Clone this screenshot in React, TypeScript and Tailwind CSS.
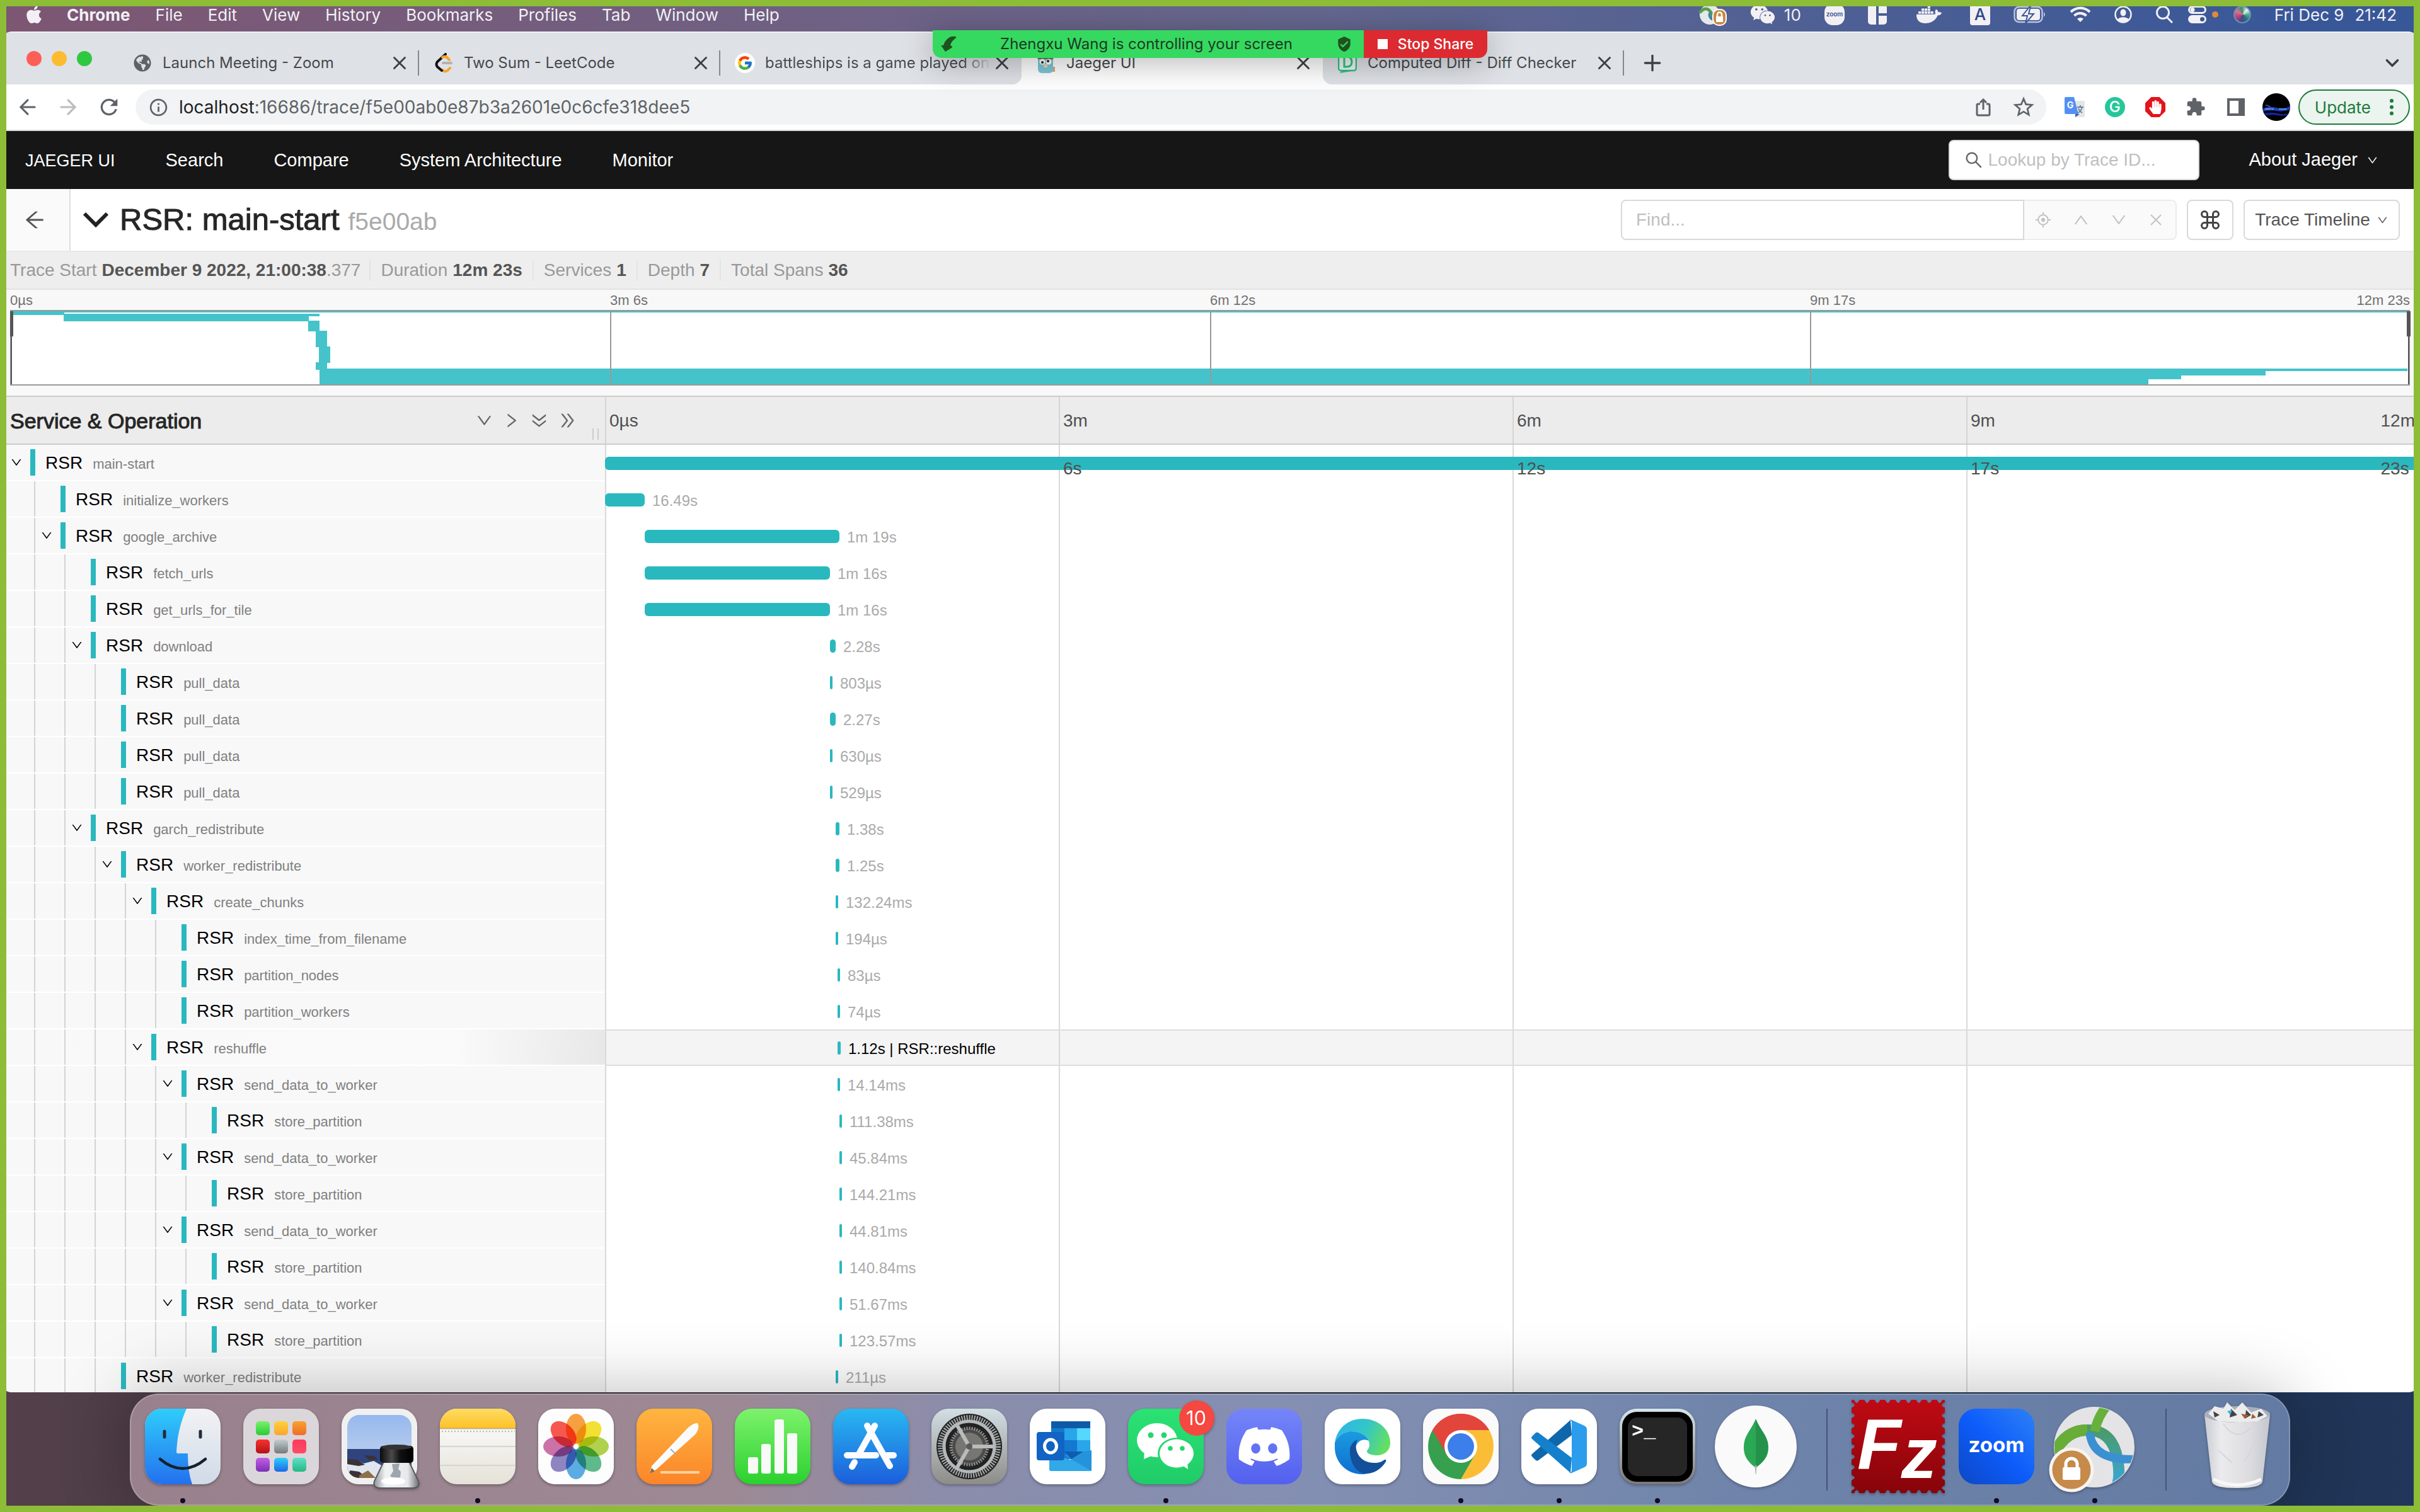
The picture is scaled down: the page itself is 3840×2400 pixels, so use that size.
import React from "react";
import { FaApple, FaDiscord, FaDocker, FaWeixin, FaGlobeAmericas, FaHandPaper } from "react-icons/fa";
import {
  AiOutlineDown,
  AiOutlineUp,
  AiOutlineRight,
  AiOutlineDoubleRight,
  AiOutlineClose,
  AiOutlineAim,
  AiOutlineSearch,
  AiOutlineArrowLeft,
} from "react-icons/ai";
import { MdExtension, MdStarBorder, MdRefresh, MdInfoOutline, MdVerifiedUser } from "react-icons/md";
import { FcGoogle } from "react-icons/fc";
import { ArrowLeft, ArrowRight, ChevronDown, Command, Plus, X } from "lucide-react";

/* ---------- data ---------- */

const MENUS = ["File", "Edit", "View", "History", "Bookmarks", "Profiles", "Tab", "Window", "Help"];

type Span = {
  depth: number;
  op: string;
  label: string;
  start: number;
  width: number;
  open?: boolean;
  hover?: boolean;
};

/* start and width are in units of the 2880-wide timeline */
const TIMELINE = 2880;

const SPANS: Span[] = [
  { depth: 0, op: "main-start", label: "", start: 0, width: 2880, open: true },
  { depth: 1, op: "initialize_workers", label: "16.49s", start: 0, width: 63 },
  { depth: 1, op: "google_archive", label: "1m 19s", start: 63, width: 309, open: true },
  { depth: 2, op: "fetch_urls", label: "1m 16s", start: 63, width: 294 },
  { depth: 2, op: "get_urls_for_tile", label: "1m 16s", start: 63, width: 294 },
  { depth: 2, op: "download", label: "2.28s", start: 357, width: 9, open: true },
  { depth: 3, op: "pull_data", label: "803µs", start: 357, width: 4 },
  { depth: 3, op: "pull_data", label: "2.27s", start: 357, width: 9 },
  { depth: 3, op: "pull_data", label: "630µs", start: 357, width: 4 },
  { depth: 3, op: "pull_data", label: "529µs", start: 357, width: 4 },
  { depth: 2, op: "garch_redistribute", label: "1.38s", start: 366, width: 6, open: true },
  { depth: 3, op: "worker_redistribute", label: "1.25s", start: 366, width: 6, open: true },
  { depth: 4, op: "create_chunks", label: "132.24ms", start: 366, width: 4, open: true },
  { depth: 5, op: "index_time_from_filename", label: "194µs", start: 366, width: 4 },
  { depth: 5, op: "partition_nodes", label: "83µs", start: 369, width: 4 },
  { depth: 5, op: "partition_workers", label: "74µs", start: 369, width: 4 },
  { depth: 4, op: "reshuffle", label: "1.12s | RSR::reshuffle", start: 369, width: 5, open: true, hover: true },
  { depth: 5, op: "send_data_to_worker", label: "14.14ms", start: 369, width: 4, open: true },
  { depth: 6, op: "store_partition", label: "111.38ms", start: 372, width: 4 },
  { depth: 5, op: "send_data_to_worker", label: "45.84ms", start: 372, width: 4, open: true },
  { depth: 6, op: "store_partition", label: "144.21ms", start: 372, width: 4 },
  { depth: 5, op: "send_data_to_worker", label: "44.81ms", start: 372, width: 4, open: true },
  { depth: 6, op: "store_partition", label: "140.84ms", start: 372, width: 4 },
  { depth: 5, op: "send_data_to_worker", label: "51.67ms", start: 372, width: 4, open: true },
  { depth: 6, op: "store_partition", label: "123.57ms", start: 372, width: 4 },
  { depth: 3, op: "worker_redistribute", label: "211µs", start: 366, width: 4 },
];

/* ---------- macOS menu bar ---------- */

function MenuBar() {
  return (
    <header className="flex h-[50px] shrink-0 items-center justify-between bg-linear-to-r from-[#7d5672] via-[#64678f] via-55% to-[#385798] to-95% pr-[37px] pb-1 pl-[38px] font-[Inter,sans-serif] text-[26px] text-[#f2f0f5]">
      <nav className="flex items-center gap-[40px]">
        <div className="flex items-center gap-[36px]">
          <FaApple className="size-[32px]" />
          <span className="font-bold">Chrome</span>
        </div>
        {MENUS.map((m) => (
          <span key={m}>{m}</span>
        ))}
      </nav>
      <div className="flex items-center gap-[37px]">
        <svg viewBox="0 0 44 34" className="h-[34px] w-[44px] overflow-visible">
          <circle cx="17" cy="17" r="16" fill="#e4e8ea" />
          <path d="M1 14C8 6 14 6 19 14L24 25" stroke="#56a04a" strokeWidth="5" fill="none" />
          <path d="M19 14c-5 3-2 10 6 12" stroke="#3d86a8" strokeWidth="4" fill="none" />
          <rect x="22" y="9" width="21" height="25" rx="9" fill="#c88945" stroke="#fff" strokeWidth="2" />
          <rect x="27" y="20" width="11" height="9" fill="#fff" />
          <path d="M29 20v-3a3 3 0 0 1 7 0v3" stroke="#fff" strokeWidth="2.5" fill="none" />
        </svg>
        <span className="flex items-center gap-[14px]">
          <FaWeixin className="size-[40px]" />
          10
        </span>
        <svg viewBox="0 0 32 32" className="size-[32px] overflow-visible">
          <rect x="0" y="-1" width="32" height="34" rx="13" fill="currentColor" />
          <text x="16" y="19" textAnchor="middle" fontSize="10" fontWeight="600" fill="#33508f">
            zoom
          </text>
        </svg>
        <svg viewBox="0 0 30 32" className="h-[32px] w-[30px]" fill="currentColor">
          <path d="M5 0h8v32H5a5 5 0 0 1-5-5V5a5 5 0 0 1 5-5zM17 0h8a5 5 0 0 1 5 5v9H17zM17 18h13v9a5 5 0 0 1-5 5h-8z" />
        </svg>
        <FaDocker className="mr-[8px] ml-[10px] size-[40px]" />
        <svg viewBox="0 0 32 34" className="h-[34px] w-[32px]">
          <rect width="32" height="34" rx="4" fill="currentColor" />
          <text x="16" y="26" textAnchor="middle" fontSize="26" fontWeight="500" fill="#2f4988">
            A
          </text>
        </svg>
        <svg viewBox="0 0 52 28" className="h-[28px] w-[52px]" fill="none">
          <rect x="1.500" y="2" width="44" height="24" rx="7" stroke="#b9c3dd" strokeWidth="2.500" />
          <rect x="5" y="5" width="37" height="18" rx="4" fill="currentColor" />
          <path d="M26 1L14 16h8l-3 12 13-15h-8l3-12z" fill="#f2f0f5" stroke="#3b5796" strokeWidth="2" />
          <path d="M48 10v8q4-4 0-8z" fill="#b9c3dd" />
        </svg>
        <svg viewBox="0 0 34 26" className="h-[26px] w-[34px]" fill="none" stroke="currentColor" strokeWidth="4">
          <path d="M2 9a21 21 0 0 1 30 0M7.500 15a13.500 13.500 0 0 1 19 0" />
          <path d="M17 25l-5-5a7 7 0 0 1 10 0z" fill="currentColor" stroke="none" />
        </svg>
        <svg viewBox="0 0 28 28" className="size-[28px]" fill="none">
          <circle cx="14" cy="14" r="12.500" stroke="currentColor" strokeWidth="2.500" />
          <ellipse cx="14" cy="11" rx="4.500" ry="5.500" fill="currentColor" />
          <path d="M5 22c3-5 15-5 18 0-4 6-14 6-18 0z" fill="currentColor" />
        </svg>
        <span className="flex items-center gap-[24px]">
          <svg viewBox="0 0 28 28" className="size-[28px]" fill="none" stroke="currentColor" strokeWidth="3">
            <circle cx="12" cy="11" r="9.500" />
            <path d="M18.500 18.500L27 27" />
          </svg>
          <span className="flex items-center gap-[8px]">
            <svg viewBox="0 0 30 28" className="h-[28px] w-[30px]" fill="none">
              <rect x="1.500" y="1.500" width="26" height="10" rx="5" stroke="currentColor" strokeWidth="3" />
              <circle cx="7" cy="6.500" r="3.500" fill="currentColor" />
              <rect x="0" y="15" width="29" height="13" rx="6.500" fill="currentColor" />
              <circle cx="22.500" cy="21.500" r="3.500" fill="#3b5796" />
            </svg>
            <span className="size-[10px] rounded-full bg-[#dd8a3c]" />
          </span>
          <span className="size-[28px] rounded-full border-2 border-[#6f8fb8] bg-[conic-gradient(from_40deg_at_55%_50%,#e9f6f5,#4fae94,#2f6f7d,#3d4a86,#b7417b,#d8738f,#3b8a6d,#e9f6f5)]" />
        </span>
        <span className="flex gap-[17px]">
          <span>Fri Dec 9</span>
          <span>21:42</span>
        </span>
      </div>
    </header>
  );
}

/* ---------- browser chrome ---------- */

function Tab({
  icon,
  title,
  active,
  divider,
  faded,
}: {
  icon: React.ReactNode;
  title: string;
  active?: boolean;
  divider?: boolean;
  faded?: boolean;
}) {
  return (
    <div
      role="tab"
      aria-selected={!!active}
      className={
        "relative flex h-[68px] w-[478px] items-center pr-[14px] pl-[23px] " + (active ? "rounded-t-[16px] bg-white" : "")
      }
    >
      {active && (
        <>
          <span className="absolute bottom-0 -left-4 size-4 bg-[radial-gradient(circle_at_0_0,transparent_16px,#fff_17px)]" />
          <span className="absolute -right-4 bottom-0 size-4 bg-[radial-gradient(circle_at_100%_0,transparent_16px,#fff_17px)]" />
        </>
      )}
      <span className="flex w-[32px] shrink-0 justify-center">{icon}</span>
      <span
        className={
          "ml-[16px] flex-1 overflow-hidden whitespace-nowrap " +
          (faded ? "bg-linear-to-r from-[#45494d] from-87% to-transparent bg-clip-text text-transparent" : "text-[#45494d]")
        }
      >
        {title}
      </span>
      <button aria-label={"Close " + title} className="shrink-0 text-[#3c4043]">
        <X className="size-[34px]" strokeWidth={2} />
      </button>
      {divider && <span className="absolute top-[14px] right-0 h-[40px] w-[2px] bg-[#85888d]" />}
    </div>
  );
}

function TabStrip() {
  return (
    <div className="flex h-[84px] shrink-0 items-end border-t-2 border-[#f0f1f4] bg-[#dee1e6] pr-[27px] pl-[42px] font-[Inter,sans-serif] text-[24px]">
      <div className="flex h-[82px] items-center gap-[16px] pr-[41px]">
        <button aria-label="Close window" className="size-[24px] rounded-full bg-[#fd5f57]" />
        <button aria-label="Minimize window" className="size-[24px] rounded-full bg-[#fdbb2e]" />
        <button aria-label="Zoom window" className="size-[24px] rounded-full bg-[#2fc840]" />
      </div>
      <div role="tablist" className="flex">
        <Tab icon={<FaGlobeAmericas className="size-[28px] text-[#5f6368]" />} title="Launch Meeting - Zoom" divider />
        <Tab
          icon={
            <svg viewBox="0 0 30 32" className="h-[32px] w-[30px]" fill="none" strokeLinecap="round" strokeWidth="4">
              <path d="M24 11l-4-4M25 24l-4 4q-4 3-8-1" stroke="#f9a12f" />
              <path d="M14 16h13" stroke="#b3b3b3" />
              <path d="M18 2L5 14q-3 4 0 8l7 6" stroke="#111" />
              <path d="M13 7q5-3 9 2" stroke="#f9a12f" />
            </svg>
          }
          title="Two Sum - LeetCode"
          divider
        />
        <Tab
          icon={
            <span className="flex size-[32px] items-center justify-center rounded-full bg-white">
              <FcGoogle className="size-[26px]" />
            </span>
          }
          title="battleships is a game played on"
          faded
        />
        <Tab
          active
          icon={
            <svg viewBox="0 0 30 32" className="h-[32px] w-[30px]">
              <rect x="2" y="6" width="24" height="26" rx="6" fill="#7cc6d8" />
              <path d="M1 10c2-9 22-9 26 0z" fill="#6b7a4b" />
              <circle cx="9" cy="14" r="4.500" fill="#fff" />
              <circle cx="19" cy="14" r="4.500" fill="#fff" />
              <circle cx="9" cy="15" r="2" fill="#222" />
              <circle cx="18" cy="13" r="2" fill="#222" />
              <rect x="11" y="18" width="6" height="5" fill="#e9d3b0" />
              <rect x="25" y="22" width="4" height="8" fill="#c9b08a" />
            </svg>
          }
          title="Jaeger UI"
        />
        <Tab
          icon={
            <svg viewBox="0 0 30 34" className="h-[34px] w-[30px]">
              <rect x="1" y="1" width="28" height="28" rx="4" fill="#e9f5ef" stroke="#2fbf82" strokeWidth="2.500" />
              <path d="M3 33l3-4h21z" fill="#2fbf82" />
              <path d="M10 7h4q8 0 8 8t-8 8h-4z" fill="none" stroke="#2fbf82" strokeWidth="3" />
            </svg>
          }
          title="Computed Diff - Diff Checker"
          divider
        />
      </div>
      <button aria-label="New tab" className="ml-[25px] flex h-[68px] items-center text-[#3c4043]">
        <Plus className="size-[40px]" strokeWidth={2} />
      </button>
      <button aria-label="Search tabs" className="ml-auto flex h-[68px] items-center text-[#3c4043]">
        <ChevronDown className="size-[34px]" strokeWidth={2.5} />
      </button>
    </div>
  );
}

function Toolbar() {
  return (
    <div className="flex h-[74px] shrink-0 items-center border-b-2 border-[#d5d7db] bg-white pr-[16px] pl-[25px] font-[Inter,sans-serif] text-[#5f6368]">
      <div className="flex items-center gap-[26px]">
        <button aria-label="Back">
          <ArrowLeft className="size-[38px]" strokeWidth={2} />
        </button>
        <button aria-label="Forward" className="text-[#babcbe]">
          <ArrowRight className="size-[38px]" strokeWidth={2} />
        </button>
        <button aria-label="Reload">
          <MdRefresh className="size-[40px]" />
        </button>
      </div>
      <div className="ml-[22px] flex h-[56px] flex-1 items-center rounded-full bg-[#f1f3f4] pr-[16px] pl-[20px]">
        <MdInfoOutline className="size-[33px]" />
        <div role="textbox" aria-label="Address" className="ml-[16px] text-[28px]">
          <span className="text-[#202124]">localhost</span>
          <span>:16686/trace/f5e00ab0e87b3a2601e0c6cfe318dee5</span>
        </div>
        <button aria-label="Share" className="ml-auto">
          <svg viewBox="0 0 24 30" className="h-[30px] w-[24px]" fill="none" stroke="currentColor" strokeWidth="3">
            <path d="M7 10H4q-2 0-2 2v14q0 2 2 2h16q2 0 2-2V12q0-2-2-2h-3M12 19V3M7 8l5-5 5 5" />
          </svg>
        </button>
        <button aria-label="Bookmark" className="ml-[32px]">
          <MdStarBorder className="size-[40px]" />
        </button>
      </div>
      <div className="ml-[29px] flex items-center gap-[32px]">
        <button aria-label="Translate">
          <svg viewBox="0 0 32 32" className="size-[32px]">
            <path d="M12 6h18q2 0 2 2v22q0 2-2 2H18z" fill="#e3e5e8" />
            <path d="M17 27h7l-7 5z" fill="#3b5fc4" />
            <path d="M2 0h13l7 27H2q-2 0-2-2V2q0-2 2-2z" fill="#5290f5" />
            <text x="9" y="18" textAnchor="middle" fontSize="14" fontWeight="700" fill="#fff">
              G
            </text>
            <path d="M20 16h10M25 13v3M28 16q-2 7-7 9M22 18q2 5 6 7" stroke="#6a8391" strokeWidth="1.800" fill="none" />
          </svg>
        </button>
        <button
          aria-label="Grammarly"
          className="flex size-[32px] items-center justify-center rounded-full bg-[#26c69b] text-[24px] leading-none font-medium text-white"
        >
          G
        </button>
        <button aria-label="AdBlock" className="relative flex size-[32px] items-center justify-center">
          <svg viewBox="0 0 32 32" className="absolute size-[32px]">
            <path d="M9.500 0h13L32 9.500v13L22.500 32h-13L0 22.500v-13z" fill="#e3141c" />
          </svg>
          <FaHandPaper className="relative size-[22px] text-white" />
        </button>
        <button aria-label="Extensions">
          <MdExtension className="size-[32px]" />
        </button>
        <div className="flex items-center gap-[28px]">
          <button aria-label="Side panel" className="pl-[2px]">
            <svg viewBox="0 0 28 28" className="size-[28px]">
              <path d="M0 0h28v28H0zM4 4v20h14V4z" fill="#5f6368" fillRule="evenodd" />
            </svg>
          </button>
          <button aria-label="Profile" className="size-[44px] overflow-hidden rounded-full bg-black">
            <svg viewBox="0 0 44 44" className="size-[44px]">
              <path d="M0 25q10-6 22-2t22-3v6q-12 4-22 2T0 29z" fill="#1d3fc0" />
              <path d="M0 33q12-4 24-1t20-1v3q-12 3-20 1t-24 1z" fill="#1525a0" />
              <path d="M4 25h14M26 25h12" stroke="#79b4f5" strokeWidth="1.500" />
              <path d="M5 19q8 0 9 8" stroke="#4059c8" strokeWidth="1.500" fill="none" />
            </svg>
          </button>
        </div>
      </div>
      <button className="ml-[13px] flex h-[56px] items-center rounded-full border-2 border-[#1e7b3c] bg-[#ebf4ef] pr-[24px] pl-[24px] text-[26px] text-[#1e7b3c]">
        Update
        <svg viewBox="0 0 6 28" className="ml-[30px] h-[28px] w-[6px]" fill="currentColor">
          <circle cx="3" cy="4" r="3" />
          <circle cx="3" cy="14" r="3" />
          <circle cx="3" cy="24" r="3" />
        </svg>
      </button>
    </div>
  );
}

/* ---------- Jaeger ---------- */

function JaegerNav() {
  return (
    <nav className="flex h-[92px] shrink-0 items-center bg-[#161616] pr-[66px] pl-[40px] text-[29px] text-white">
      <div className="flex items-baseline gap-[80px] pt-[2px]">
        <a href="#home" className="text-[27px]">
          JAEGER UI
        </a>
        <a href="#search">Search</a>
        <a href="#compare">Compare</a>
        <a href="#architecture">System Architecture</a>
        <a href="#monitor">Monitor</a>
      </div>
      <label className="ml-auto flex h-[64px] w-[398px] items-center rounded-[8px] border-2 border-[#d9d9d9] bg-white pl-[22px]">
        <AiOutlineSearch className="size-[32px] shrink-0 text-[#666]" />
        <input
          aria-label="Lookup by Trace ID"
          placeholder="Lookup by Trace ID..."
          className="ml-[6px] w-full min-w-0 text-[28px] text-black outline-none placeholder:text-[#bfbfbf]"
        />
      </label>
      <button className="ml-[78px] flex items-center gap-[14px]">
        About Jaeger
        <AiOutlineDown className="size-[19px]" />
      </button>
    </nav>
  );
}

function TraceHeader() {
  return (
    <div className="flex h-[100px] shrink-0 items-center border-b-2 border-[#e8e8e8] bg-white pr-[32px]">
      <button
        aria-label="Back to search"
        className="flex h-full w-[112px] items-center justify-center border-r-2 border-[#dddddd] bg-[#fafafa] text-[#555]"
      >
        <AiOutlineArrowLeft className="size-[38px]" />
      </button>
      <h1 className="flex items-center">
        <button aria-label="Collapse header" className="ml-[18px] text-[#222]">
          <svg viewBox="0 0 44 28" className="h-[28px] w-[44px]" fill="none" stroke="currentColor" strokeWidth="6">
            <path d="M4 4l18 18L40 4" />
          </svg>
        </button>
        <span className="ml-[16px] text-[49px] text-[#262626] [-webkit-text-stroke:1px]">RSR: main-start</span>
        <small className="ml-[14px] pt-[6px] text-[39px] text-[#aaaaaa]">f5e00ab</small>
      </h1>
      <div className="ml-auto flex h-[64px] items-stretch text-[28px]">
        <input
          aria-label="Find in trace"
          placeholder="Find..."
          className="w-[640px] rounded-l-[8px] border-2 border-[#d9d9d9] bg-white px-[22px] outline-none placeholder:text-[#bfbfbf]"
        />
        <div className="flex w-[242px] items-center justify-between rounded-r-[8px] border-2 border-l-0 border-[#ececec] bg-[#fafafa] pr-[18px] pl-[16px] text-[#c4c4c4]">
          <button aria-label="Locate">
            <AiOutlineAim className="size-[28px]" />
          </button>
          <button aria-label="Previous match">
            <AiOutlineUp className="size-[28px]" />
          </button>
          <button aria-label="Next match">
            <AiOutlineDown className="size-[28px]" />
          </button>
          <button aria-label="Clear search">
            <AiOutlineClose className="size-[26px]" />
          </button>
        </div>
        <button
          aria-label="Keyboard shortcuts"
          className="ml-[16px] flex w-[74px] items-center justify-center rounded-[8px] border-2 border-[#d9d9d9] text-[#444]"
        >
          <Command className="size-[36px]" strokeWidth={2} />
        </button>
        <button className="ml-[16px] flex w-[248px] items-center justify-center gap-[10px] rounded-[8px] border-2 border-[#d9d9d9] text-[#555]">
          Trace Timeline
          <AiOutlineDown className="size-[19px]" />
        </button>
      </div>
    </div>
  );
}

function Summary() {
  const items = [
    ["Duration", "12m 23s"],
    ["Services", "1"],
    ["Depth", "7"],
    ["Total Spans", "36"],
  ];
  return (
    <dl className="flex h-[60px] shrink-0 items-center border-b-2 border-[#e2e2e2] bg-[#eeeeee] pl-[16px] text-[28px] leading-[34px] text-[#999]">
      <div className="flex gap-[8px] pr-[14px]">
        <dt>Trace Start</dt>
        <dd>
          <b className="text-[#555]">December 9 2022, 21:00:38</b>.377
        </dd>
      </div>
      {items.map(([k, v]) => (
        <div key={k} className="flex gap-[8px] border-l-2 border-[#e4e4e4] px-[16px]">
          <dt>{k}</dt>
          <dd className="font-bold text-[#555]">{v}</dd>
        </div>
      ))}
    </dl>
  );
}

function Minimap() {
  return (
    <div className="shrink-0 bg-[#f8f8f8] pr-[16px] pb-[16px] pl-[16px]">
      <div className="flex h-[32px] text-[22px] leading-[34px] text-[#717171]">
        <span className="flex-1">0µs</span>
        <span className="flex-1">3m 6s</span>
        <span className="flex-1">6m 12s</span>
        <span className="flex flex-1 justify-between">
          <span>9m 17s</span>
          <span>12m 23s</span>
        </span>
      </div>
      <svg
        viewBox="0 0 3808 120"
        preserveAspectRatio="none"
        className="block h-[120px] w-full overflow-visible"
        role="img"
        aria-label="Trace overview"
      >
        <rect x="1" y="1" width="3806" height="118" fill="#fff" />
        <g fill="#45c3ca">
          <rect x="2" y="2" width="3802" height="2" />
          <rect x="2" y="3" width="84" height="5" />
          <rect x="85" y="6" width="406" height="4" />
          <rect x="85" y="9" width="389" height="9" />
          <rect x="473" y="17" width="18" height="17" />
          <rect x="485" y="33" width="18" height="26" />
          <rect x="490" y="58" width="18" height="26" />
          <rect x="485" y="83" width="18" height="12" />
          <rect x="491" y="93" width="3313" height="4" />
          <rect x="491" y="95" width="3088" height="9" />
          <rect x="491" y="102" width="2954" height="8" />
          <rect x="491" y="109" width="2902" height="9" />
        </g>
        <path d="M953 1v118M1905 1v118M2857 1v118" stroke="#999" strokeWidth="2" />
        <rect x="1" y="1" width="3806" height="118" fill="none" stroke="#999" strokeWidth="2" />
        <rect x="0" y="2" width="5" height="40" fill="#555" />
        <rect x="1" y="2" width="2" height="116" fill="#555" />
        <rect x="3803" y="2" width="6" height="40" fill="#555" />
        <rect x="3805" y="2" width="2" height="116" fill="#555" />
      </svg>
    </div>
  );
}

function TimelineHeader() {
  return (
    <div className="relative z-10 flex h-[78px] shrink-0 border-y-2 border-[#cccccc] bg-[#ececec]">
      <div className="flex w-1/4 items-center pl-[16px]">
        <h2 className="pt-[2px] text-[34px] text-[#262626] [-webkit-text-stroke:1px]">Service &amp; Operation</h2>
        <div className="mr-[24px] ml-auto flex items-center gap-[14px] text-[#666]">
          <button aria-label="Collapse one level">
            <AiOutlineDown className="size-[29px]" />
          </button>
          <button aria-label="Expand one level">
            <AiOutlineRight className="size-[29px]" />
          </button>
          <button aria-label="Collapse all">
            <AiOutlineDoubleRight className="size-[31px] rotate-90" />
          </button>
          <button aria-label="Expand all">
            <AiOutlineDoubleRight className="size-[31px]" />
          </button>
        </div>
        <span className="mr-[10px] mb-[6px] h-[18px] w-[10px] self-end border-x-2 border-[#cccccc]" />
      </div>
      <div className="flex flex-1 text-[28px] leading-[76px] text-[#505050]">
        {["0µs", "3m 6s", "6m 12s", "9m 17s"].map((t, i) => (
          <div key={t} className="flex h-[74px] flex-1 justify-between border-l-2 border-[#d5d5d5] pr-[8px] pl-[5px]">
            <span className="w-min">{t}</span>
            {i === 3 && <span className="w-min">12m 23s</span>}
          </div>
        ))}
      </div>
    </div>
  );
}

function SpanRow({ span }: { span: Span }) {
  return (
    <div role="treeitem" aria-level={span.depth + 1} className="flex h-[58px] shrink-0">
      <div
        className={
          "flex w-1/4 border-b-2 border-white pl-[8px] " +
          (span.hover ? "bg-linear-to-r from-[#f8f8f8] via-[#fafafa] via-75% to-[#e8e8e8]" : "bg-[#f8f8f8]")
        }
      >
        {Array.from({ length: span.depth }, (_, i) => (
          <span key={i} className="w-[48px] shrink-0 border-r-2 border-[#d4d4d4]" />
        ))}
        <span className="flex w-[40px] shrink-0 items-center justify-center pr-[4px]">
          {span.open && (
            <button aria-label={"Toggle " + span.op}>
              <AiOutlineDown className="size-[20px] text-black" />
            </button>
          )}
        </span>
        <span className="h-[42px] w-[8px] shrink-0 self-center bg-[#2ab8bf]" />
        <a href="#span" className="ml-[16px] flex h-[56px] items-baseline gap-[16px] leading-[58px] text-black">
          <span className="text-[28px]">RSR</span>
          <span className="text-[22px] text-[#808080]">{span.op}</span>
        </a>
      </div>
      <div
        className={
          "relative flex flex-1 items-center overflow-hidden " +
          (span.hover ? "border-y-2 border-[#dddddd] bg-[#f4f4f4]" : "bg-white")
        }
      >
        <span className="absolute inset-0 flex">
          <span className="flex-1 border-l-2 border-[#d9d9d9]" />
          <span className="flex-1 border-l-2 border-[#d9d9d9]" />
          <span className="flex-1 border-l-2 border-[#d9d9d9]" />
          <span className="flex-1 border-l-2 border-[#d9d9d9]" />
        </span>
        <span
          className="relative h-[21px] shrink-0 rounded-[6px] bg-[#2ab8bf]"
          style={{
            marginLeft: `${(span.start / TIMELINE) * 100}%`,
            width: `${(span.width / TIMELINE) * 100}%`,
          }}
        />
        <span
          className={
            "relative ml-[12px] pt-[3px] text-[24px] whitespace-nowrap " + (span.hover ? "text-black" : "text-[#aaaaaa]")
          }
        >
          {span.label}
        </span>
      </div>
    </div>
  );
}

/* ---------- dock ---------- */

function Art({ children }: { children: React.ReactNode }) {
  return (
    <svg viewBox="0 0 120 120" className="size-[120px] overflow-visible drop-shadow-[0_2px_2px_rgba(0,0,0,0.3)]">
      {children}
    </svg>
  );
}

function Grad({ id, from, to }: { id: string; from: string; to: string }) {
  return (
    <linearGradient id={id} x1="0" y1="0" x2="0" y2="1">
      <stop offset="0" stopColor={from} />
      <stop offset="1" stopColor={to} />
    </linearGradient>
  );
}

function Tile({ fill }: { fill: string }) {
  return <rect width="120" height="120" rx="27" fill={fill} />;
}

const PETALS = ["#f9972c", "#f3df1c", "#a9cf3a", "#4fb57f", "#4aa5e2", "#8379bf", "#c9649f", "#f8473d"];
const PAD_COLORS = [
  ["#7bf06c", "#28cc35"],
  ["#ffd13a", "#fba52c"],
  ["#f9a12c", "#ee6c2c"],
  ["#f8332c", "#b5101a"],
  ["#c3ccd0", "#747a7c"],
  ["#fd3a5c", "#fb4d66"],
  ["#c25fe6", "#7a30b5"],
  ["#2cd0fb", "#1f66e6"],
  ["#5ee0cb", "#25b882"],
];

function stampPath() {
  const a = -14;
  const n = 9;
  const s = 148 / n;
  const t = s * 0.5;
  const f = (s - t) / 2;
  let d = `M${a} ${a}`;
  for (let i = 0; i < n; i++) d += `h${f}q${t / 2} 10 ${t} 0h${f}`;
  for (let i = 0; i < n; i++) d += `v${f}q-10 ${t / 2} 0 ${t}v${f}`;
  for (let i = 0; i < n; i++) d += `h${-f}q${-t / 2} -10 ${-t} 0h${-f}`;
  for (let i = 0; i < n; i++) d += `v${-f}q10 ${-t / 2} 0 ${-t}v${-f}`;
  return d + "z";
}

const Finder = (
  <Art>
    <Grad id="fa" from="#2fcdfb" to="#2470ee" />
    <Grad id="fb" from="#f2f2f4" to="#cfdbe8" />
    <Tile fill="url(#fb)" />
    <path d="M27 0H66C56 22 51 45 50 69q0 2 3 2H68q0 30 7 49H27A27 27 0 0 1 0 93V27A27 27 0 0 1 27 0z" fill="url(#fa)" />
    <path d="M31 36v9M88 36v9" stroke="#222c3a" strokeWidth="5" strokeLinecap="round" />
    <path d="M24 80q36 30 72 0" stroke="#16202e" strokeWidth="4.500" fill="none" strokeLinecap="round" />
  </Art>
);

const Launchpad = (
  <Art>
    <Tile fill="#dbd6da" />
    {PAD_COLORS.map(([from, to], i) => (
      <React.Fragment key={i}>
        <Grad id={"lp" + i} from={from} to={to} />
        <rect x={20 + (i % 3) * 29} y={20 + Math.floor(i / 3) * 29} width="22" height="22" rx="5" fill={`url(#lp${i})`} />
      </React.Fragment>
    ))}
  </Art>
);

const Preview = (
  <Art>
    <Grad id="sky" from="#95b8ee" to="#b4cbee" />
    <linearGradient id="cap" x1="0" y1="0" x2="1" y2="0">
      <stop offset="0" stopColor="#0a0a0a" />
      <stop offset="0.350" stopColor="#4a4a4a" />
      <stop offset="0.600" stopColor="#111" />
      <stop offset="1" stopColor="#000" />
    </linearGradient>
    <linearGradient id="gls" x1="0" y1="0" x2="1" y2="0">
      <stop offset="0" stopColor="#8f9396" />
      <stop offset="0.250" stopColor="#f0f1f2" />
      <stop offset="0.750" stopColor="#e8e9ea" />
      <stop offset="1" stopColor="#6b6f72" />
    </linearGradient>
    <clipPath id="pc">
      <rect x="9" y="10" width="102" height="100" rx="19" />
    </clipPath>
    <Tile fill="#f0f0f0" />
    <g clipPath="url(#pc)">
      <rect x="9" y="10" width="102" height="55" fill="url(#sky)" />
      <rect x="9" y="64" width="102" height="50" fill="#2f437e" />
      <path d="M9 86l14-5 12 6 16-4 14 8 20-3 26 4v30H9z" fill="#dfe6f0" />
      <path d="M9 80l16 1 12 8-10 2-18-3zM14 98l14 2 10 8-18 4-12-6zM36 74l16 1 6 6-14 1z" fill="#3b3237" />
      <path d="M28 106l14-8 14 14H28z" fill="#8c7048" />
    </g>
    <path d="M67 84h40l15 31q3 11-10 11H62q-13 0-10-11z" fill="url(#gls)" stroke="#55585c" strokeWidth="2" />
    <path d="M80 88l12-1-2 9 4 4-1 9-10 2-6-4 5-8z" fill="#7e8690" opacity="0.7" />
    <ellipse cx="82" cy="115" rx="19" ry="6" fill="#fff" />
    <rect x="61" y="59" width="53" height="27" rx="5" fill="url(#cap)" />
    <ellipse cx="87" cy="61" rx="24" ry="4" fill="#333" />
  </Art>
);

const Notes = (
  <Art>
    <Grad id="nb" from="#ffffff" to="#e4e2d8" />
    <Grad id="ny" from="#fedc62" to="#fdc128" />
    <Tile fill="url(#nb)" />
    <path d="M0 31V27A27 27 0 0 1 27 0h66a27 27 0 0 1 27 27v4z" fill="url(#ny)" />
    <path d="M0 31.500h120" stroke="#b8a878" strokeWidth="1.500" />
    <path d="M3 36h116" stroke="#bbb" strokeWidth="2.500" strokeDasharray="2 3" />
    <path d="M0 60h120M0 90h120" stroke="#d6d5d6" strokeWidth="2" />
  </Art>
);

const Photos = (
  <Art>
    <Tile fill="#fdfdfd" />
    {PETALS.map((c, i) => (
      <ellipse
        key={c}
        cx="60"
        cy="32"
        rx="16"
        ry="24"
        fill={c}
        opacity="0.9"
        transform={`rotate(${i * 45} 60 60)`}
        className="mix-blend-multiply"
      />
    ))}
  </Art>
);

const Pages = (
  <Art>
    <Grad id="pg" from="#ffb540" to="#fb8529" />
    <Tile fill="url(#pg)" />
    <rect x="38" y="99" width="62" height="4" rx="1" fill="#ffd2a0" />
    <path d="M97 23q4 8-4 18L32 96l-11 7 3-12L82 30q9-8 15-7z" fill="#fbfbfb" />
    <path d="M54 64l8 8" stroke="#aaa" strokeWidth="2" />
    <path d="M21 103l3-9 5 5z" fill="#8a6a4a" />
  </Art>
);

const Numbers = (
  <Art>
    <Grad id="nu" from="#7df26c" to="#2bd12f" />
    <Tile fill="url(#nu)" />
    <g fill="#f7faf7">
      <rect x="21" y="77" width="16" height="26" rx="3" />
      <rect x="42" y="56" width="15" height="47" rx="3" />
      <rect x="63" y="17" width="15" height="86" rx="3" />
      <rect x="83" y="39" width="16" height="64" rx="3" />
    </g>
  </Art>
);

const AppStore = (
  <Art>
    <Grad id="as" from="#29b8f2" to="#1c5edb" />
    <Tile fill="url(#as)" />
    <g stroke="#fafcff" strokeWidth="10" strokeLinecap="round" fill="none">
      <path d="M66 27L42 70" />
      <path d="M54 27L90 91" />
      <path d="M22 74h46M86 74h10" />
      <path d="M34 85l-4 7" />
    </g>
  </Art>
);

const Settings = (
  <Art>
    <Grad id="se" from="#d3dfe4" to="#8d8c88" />
    <Tile fill="url(#se)" />
    <circle cx="60" cy="60" r="52" fill="#222" />
    <circle cx="60" cy="60" r="46" fill="none" stroke="#a5a9aa" strokeWidth="8" strokeDasharray="2 2" />
    <circle cx="60" cy="60" r="40" fill="none" stroke="#b4b8b9" strokeWidth="5" />
    <circle cx="60" cy="60" r="29" fill="#4b4b4a" stroke="#8e9091" strokeWidth="5" strokeDasharray="2 2" />
    <circle cx="60" cy="60" r="22" fill="#777672" />
    <path d="M60 60h38M60 60L41 27M60 60L41 93" stroke="#b9bcbc" strokeWidth="6" />
    <circle cx="60" cy="60" r="5" fill="#5a5a5a" />
  </Art>
);

const Outlook = (
  <Art>
    <Tile fill="#fff" />
    <rect x="34" y="20" width="62" height="60" rx="3" fill="#1378d0" />
    <rect x="34" y="20" width="62" height="11" fill="#0f5aa6" />
    <rect x="75" y="31" width="21" height="19" fill="#54d8fd" />
    <rect x="55" y="31" width="20" height="19" fill="#29a5ea" />
    <rect x="75" y="50" width="21" height="19" fill="#29a5ea" />
    <path d="M31 69l33 12 34-14v29q0 3-3 3H34q-3 0-3-3z" fill="#31a8e8" />
    <path d="M98 66v33L55 74z" fill="#2593dc" />
    <path d="M55 68h30L66 80z" fill="#0f5db0" />
    <rect x="11" y="37" width="44" height="45" rx="4" fill="#1263c3" />
    <ellipse cx="33" cy="59.500" rx="9.500" ry="10.500" fill="none" stroke="#fff" strokeWidth="5" />
  </Art>
);

const WeChat = (
  <Art>
    <Grad id="we" from="#2be273" to="#20cc69" />
    <Tile fill="url(#we)" />
    <path d="M26 68l-1 12 12-5z" fill="#fff" />
    <ellipse cx="46" cy="50" rx="32" ry="27" fill="#fff" />
    <circle cx="36" cy="42" r="4.500" fill="#25d66d" />
    <circle cx="57" cy="42" r="4.500" fill="#25d66d" />
    <ellipse cx="77" cy="71" rx="30" ry="25" fill="#25d66d" />
    <path d="M86 90l9 6-1-11z" fill="#fff" />
    <ellipse cx="77" cy="71" rx="27" ry="22.500" fill="#fff" />
    <circle cx="67" cy="63" r="3.800" fill="#25d66d" />
    <circle cx="86" cy="63" r="3.800" fill="#25d66d" />
    <circle cx="109" cy="15" r="28" fill="#f44840" />
    <text x="108" y="26" textAnchor="middle" fontSize="31" fill="#fff" fontFamily="Inter, sans-serif">
      10
    </text>
  </Art>
);

const Discord = (
  <span className="flex size-[120px] items-center justify-center rounded-[27px] bg-linear-to-b from-[#7585f8] to-[#5360ee] text-white">
    <FaDiscord className="size-[88px]" />
  </span>
);

const Edge = (
  <Art>
    <linearGradient id="e1" x1="0" y1="0.300" x2="1" y2="0.600">
      <stop offset="0" stopColor="#2fb5ea" />
      <stop offset="0.500" stopColor="#33c6c8" />
      <stop offset="1" stopColor="#67e05c" />
    </linearGradient>
    <Grad id="e2" from="#1a9be0" to="#0f6fd0" />
    <Tile fill="#fff" />
    <path d="M16 54C20 30 38 16 60 16c26 0 44 18 44 38 0 14-11 20-21 20-9 0-17-3-16-7 2-3 4-5 4-10 0-12-14-21-29-21-12 0-22 8-26 18z" fill="url(#e1)" />
    <path d="M16 54c4-10 14-18 26-18 13 0 24 6 28 15-4-2-10-3-15 1-10 8-10 26 1 37 5 5 10 11 12 14-4 1-7 1-9 1-25 0-43-20-43-42 0-3 0-5 0-8z" fill="url(#e2)" />
    <path d="M40 66c0-8 6-15 12-17-7 14 1 37 27 37 7 0 12-2 16-5 2-1 3 1 2 3-7 12-19 19-31 19-14 0-26-14-26-37z" fill="#13509a" />
  </Art>
);

const Chrome = (
  <Art>
    <Tile fill="#fafafa" />
    <path d="M60 60L15 34A52 52 0 0 1 105 34z" fill="#e2453c" />
    <path d="M60 60V34h45A52 52 0 0 1 60 112z" fill="#fbbd36" />
    <path d="M60 60l22.500 13L60 112A52 52 0 0 1 15 34z" fill="#36a04f" />
    <path d="M15 34A52 52 0 0 1 105 34H60z" fill="#e2453c" />
    <path d="M15 34L37.500 73 60 34z" fill="#e2453c" />
    <circle cx="60" cy="60" r="26" fill="#fff" />
    <circle cx="60" cy="60" r="21" fill="#3c7eea" />
  </Art>
);

const VSCode = (
  <Art>
    <Tile fill="#fff" />
    <path d="M78 18L17 72q-2 2 0 4l6 6q2 1 4 0L80 42z" fill="#0f67ab" />
    <path d="M78 102L17 48q-2-2 0-4l6-6q2-1 4 0L80 78z" fill="#1480cc" />
    <path d="M76 18q2-1 4 0l20 9q4 2 4 6v54q0 4-4 6l-20 9q-3 1-5-1 4 2 5-3V22q-1-5-4-4z" fill="#2c9cec" />
  </Art>
);

const Terminal = (
  <Art>
    <Grad id="te" from="#d5e6ea" to="#7b7975" />
    <Tile fill="url(#te)" />
    <rect x="4" y="5" width="112" height="111" rx="23" fill="#000" />
    <rect x="13" y="14" width="94" height="93" rx="15" fill="#262626" />
    <text x="19" y="45" fontSize="32" fontWeight="700" fill="#fff" fontFamily="'Liberation Mono', monospace">
      &gt;_
    </text>
  </Art>
);

const Mongo = (
  <Art>
    <circle cx="60" cy="60" r="65" fill="#fafafa" />
    <path d="M60 16C52 36 41 42 41 62c0 16 9 24 19 32z" fill="#2aa854" />
    <path d="M60 16c8 20 20 26 20 46 0 16-10 24-20 32z" fill="#25924b" />
    <path d="M58.500 90h3l-1 14h-1z" fill="#aab5ad" />
  </Art>
);

const FileZilla = (
  <Art>
    <Grad id="fz" from="#c00a14" to="#860409" />
    <path d={stampPath()} fill="url(#fz)" />
    <text x="-5" y="96" fontSize="114" fontWeight="700" fontStyle="italic" fill="#fff" fontFamily="'Liberation Sans', sans-serif">
      F<tspan dy="14">z</tspan>
    </text>
  </Art>
);

const ZoomApp = (
  <span className="flex size-[120px] items-center justify-center rounded-[27px] bg-linear-to-tr from-[#0c48c4] via-[#0d5cfb] to-[#2e80f4] pb-[4px] font-[Inter,sans-serif] text-[33px] font-bold text-white">
    zoom
  </span>
);

const Cisco = (
  <Art>
    <Grad id="ci" from="#4a9a6a" to="#36a8e8" />
    <clipPath id="cc">
      <circle cx="59" cy="61" r="63" />
    </clipPath>
    <circle cx="59" cy="61" r="64" fill="#e4e4e6" />
    <g clipPath="url(#cc)" fill="none">
      <path d="M-10 84Q8 34 48 34Q88 34 96 80T84 132" stroke="url(#ci)" strokeWidth="18" />
      <path d="M-10 84Q8 34 48 34" stroke="#68ad38" strokeWidth="18" />
      <path d="M82-8Q64 12 60 36" stroke="#68b03c" strokeWidth="15" />
      <path d="M52 38Q56 84 126 80" stroke="#3a90d0" strokeWidth="13" />
    </g>
    <circle cx="23" cy="97" r="33" fill="#c68a4a" stroke="#f7f4f0" strokeWidth="5" />
    <rect x="9" y="93" width="28" height="20" rx="2" fill="#fff" />
    <path d="M14 94v-6a9 9 0 0 1 18 0v6" fill="none" stroke="#fff" strokeWidth="5" />
  </Art>
);

const Trash = (
  <Art>
    <linearGradient id="tr" x1="0" y1="0" x2="1" y2="0">
      <stop offset="0" stopColor="#c9ccd3" />
      <stop offset="0.250" stopColor="#ebebed" />
      <stop offset="0.700" stopColor="#dcdcdf" />
      <stop offset="1" stopColor="#c4c7ce" />
    </linearGradient>
    <path d="M8 10L20 116q2 10 40 10t40-10L112 10z" fill="url(#tr)" />
    <ellipse cx="60" cy="9" rx="52" ry="13" fill="#a9aebb" />
    <path d="M14 8l10-12 14 4 6-10 12 12 12-12 14 16 16-6 10 12-16 8-28 2-34-2z" fill="#ececec" />
    <path d="M22 4l10 6-8 4zM50 0l10 10-12 4zM74 2l8 8-10 6zM94 4l8 6-10 4z" fill="#444" />
    <path d="M44 4l8-2-3 8z" fill="#38b8e8" />
    <path d="M66 8l12 2-6 6zM84 8l6 6-8 2z" fill="#a45a38" />
    <path d="M38 24q20 30 44 6M30 66l22 20M88 54l-16 30" stroke="#d6d6da" strokeWidth="2" fill="none" />
    <path d="M22 112q38 18 76 0" stroke="#f8f8f8" strokeWidth="5" fill="none" />
  </Art>
);

function DockItem({ name, running, children }: { name: string; running?: boolean; children: React.ReactNode }) {
  return (
    <button aria-label={name} className="relative size-[120px] shrink-0">
      {children}
      {running && <span className="absolute -bottom-[30px] left-1/2 size-[8px] -translate-x-1/2 rounded-full bg-[#120a22]" />}
    </button>
  );
}

function Dock() {
  return (
    <footer className="relative z-20 flex h-[190px] shrink-0 justify-center bg-linear-to-r from-[#54404a] via-[#202631] via-50% to-[#20365a] pt-[2px] pb-[10px]">
      <div className="flex h-[178px] gap-[36px] rounded-[46px] border-2 border-white/20 bg-[linear-gradient(95deg,#99818c_0%,#9d8994_28%,#8b8dab_38%,#838fb2_55%,#6f84aa_75%,#637aa2_100%)] bg-origin-border px-[22px] pt-[22px] shadow-[0_0_110px_rgba(0,0,0,0.28)]">
        <DockItem name="Finder" running>{Finder}</DockItem>
        <DockItem name="Launchpad">{Launchpad}</DockItem>
        <DockItem name="Preview">{Preview}</DockItem>
        <DockItem name="Notes" running>{Notes}</DockItem>
        <DockItem name="Photos">{Photos}</DockItem>
        <DockItem name="Pages">{Pages}</DockItem>
        <DockItem name="Numbers">{Numbers}</DockItem>
        <DockItem name="App Store">{AppStore}</DockItem>
        <DockItem name="System Settings">{Settings}</DockItem>
        <DockItem name="Outlook">{Outlook}</DockItem>
        <DockItem name="WeChat" running>{WeChat}</DockItem>
        <DockItem name="Discord">{Discord}</DockItem>
        <DockItem name="Edge">{Edge}</DockItem>
        <DockItem name="Google Chrome" running>{Chrome}</DockItem>
        <DockItem name="Visual Studio Code" running>{VSCode}</DockItem>
        <DockItem name="Terminal" running>{Terminal}</DockItem>
        <DockItem name="MongoDB Compass">{Mongo}</DockItem>
        <span className="mx-[16px] h-[130px] w-[2px] bg-[#44547c]" />
        <DockItem name="FileZilla">{FileZilla}</DockItem>
        <DockItem name="Zoom" running>{ZoomApp}</DockItem>
        <DockItem name="Cisco AnyConnect" running>{Cisco}</DockItem>
        <span className="mx-[16px] h-[130px] w-[2px] bg-[#44547c]" />
        <DockItem name="Trash">{Trash}</DockItem>
      </div>
    </footer>
  );
}

/* ---------- screen-share banner ---------- */

function ShareBanner() {
  return (
    <div className="absolute top-[48px] left-1/2 z-30 flex h-[44px] w-[880px] -translate-x-1/2 overflow-hidden rounded-b-[14px] font-[Inter,sans-serif] text-[24px] shadow-[0_8px_50px_rgba(0,0,0,0.3)]">
      <div className="flex flex-1 items-center bg-[#35d960] pr-[18px] pl-[12px] text-[#1d3a26]">
        <svg viewBox="0 0 26 26" className="size-[26px]" fill="#1f5220">
          <path d="M25 1q-7-1-10 1Q7 7 5 15H1l7 10 10-6q2-1 0-3l-2-1q1-6 9-12z" />
        </svg>
        <span className="flex-1 text-center">Zhengxu Wang is controlling your screen</span>
        <MdVerifiedUser className="size-[26px] text-[#1f5220]" />
      </div>
      <button className="flex w-[196px] items-center justify-center gap-[16px] bg-[#dc2a30] text-[23px] font-medium text-white">
        <span className="size-[16px] bg-white" />
        Stop Share
      </button>
    </div>
  );
}

/* ---------- page ---------- */

export default function App() {
  return (
    <div className="relative flex h-screen flex-col overflow-hidden bg-linear-to-r from-[#7d5672] to-[#385798]">
      <MenuBar />
      <main className="flex min-h-0 flex-1 flex-col overflow-hidden rounded-[20px] bg-white font-['Liberation_Sans',Arial,sans-serif]">
        <TabStrip />
        <Toolbar />
        <JaegerNav />
        <TraceHeader />
        <Summary />
        <Minimap />
        <TimelineHeader />
        <div role="tree" aria-label="Spans" className="flex min-h-0 flex-1 flex-col overflow-hidden">
          {SPANS.map((s, i) => (
            <SpanRow key={i} span={s} />
          ))}
        </div>
      </main>
      <Dock />
      <ShareBanner />
      <div className="pointer-events-none absolute inset-0 z-40 border-[10px] border-[#8dbc37]" />
    </div>
  );
}
